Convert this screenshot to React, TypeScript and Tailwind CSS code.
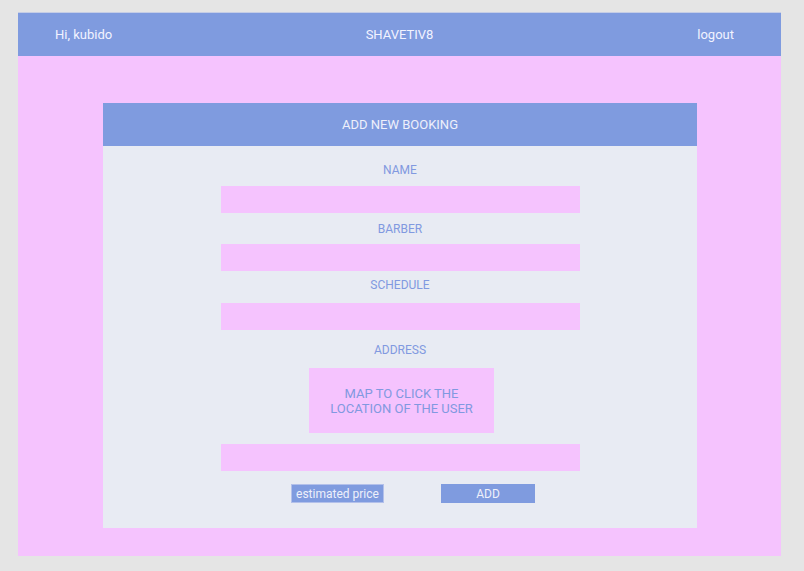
import React from 'react';

const fields = [
  { label: 'NAME', labelTop: 'mt-[16px]', inputTop: 'mt-[8px]' },
  { label: 'BARBER', labelTop: 'mt-[8px]', inputTop: 'mt-[7px]' },
  { label: 'SCHEDULE', labelTop: 'mt-[6px]', inputTop: 'mt-[10px]' },
];

export default function App() {
  return (
    <div className="min-h-[571px] bg-[#e5e5e5] pt-[12px] pl-[18px]" style={{ fontFamily: 'Roboto, "Liberation Sans", sans-serif' }}>
      <div className="w-[763px]">
        {/* Top bar */}
        <div className="grid h-[44px] grid-cols-3 items-center bg-[#7f9bdf] px-[37px] text-[13px] text-[#f2f3ff] border-t border-[#c5cde6]">
          <div className="text-left">Hi, kubido</div>
          <div className="text-center">SHAVETIV8</div>
          <div className="pr-[10px] text-right">logout</div>
        </div>

        {/* Pink area */}
        <div className="h-[500px] bg-[#f5c3fe] pt-[47px]">
          <div className="ml-[85px] w-[594px]">
            <div className="flex h-[43px] items-center justify-center bg-[#7f9bdf] text-[13px] text-[#eef0fb]">
              ADD NEW BOOKING
            </div>
            <div className="flex h-[382px] flex-col bg-[#e8ebf3] text-[12px] text-[#8199e0]">
              {fields.map(f => (
                <React.Fragment key={f.label}>
                  <div className={`${f.labelTop} h-[16px] text-center leading-[16px]`}>{f.label}</div>
                  <div className={`${f.inputTop} ml-[118px] h-[27px] w-[359px] bg-[#f5c3fe]`} />
                </React.Fragment>
              ))}
              <div className="mt-[12px] h-[16px] text-center leading-[16px]">ADDRESS</div>
              <div className="mt-[10px] ml-[206px] flex h-[65px] w-[185px] items-center justify-center bg-[#f5c3fe] text-center text-[13px] leading-[15px]">
                MAP TO CLICK THE<br />LOCATION OF THE USER
              </div>
              <div className="mt-[11px] ml-[118px] h-[27px] w-[359px] bg-[#f5c3fe]" />
              <div className="mt-[13px] flex gap-[57px] pl-[188px]">
                <div className="flex h-[19px] w-[93px] items-center justify-center border border-[#b3c0ea] bg-[#7f9bdf] text-[12px] text-[#eef0fb]">
                  estimated price
                </div>
                <div className="flex h-[19px] w-[94px] items-center justify-center bg-[#7f9bdf] text-[12px] text-[#eef0fb]">
                  ADD
                </div>
              </div>
            </div>
          </div>
        </div>
      </div>
    </div>
  );
}
